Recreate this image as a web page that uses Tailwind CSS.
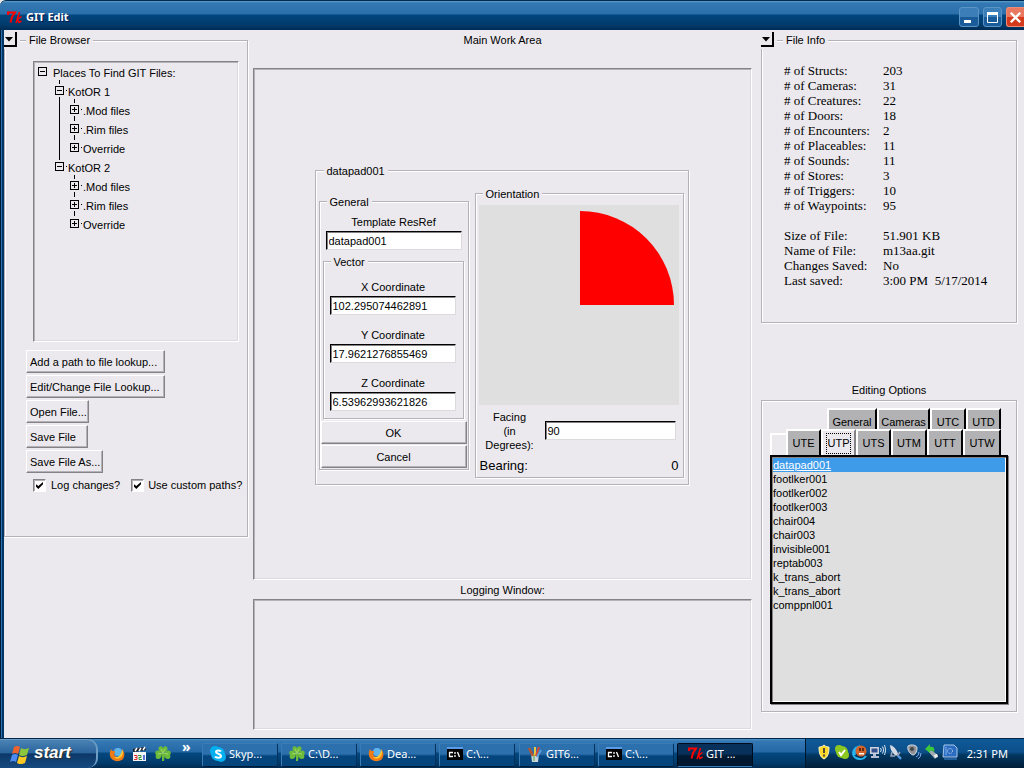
<!DOCTYPE html>
<html lang="en">
<head>
<meta charset="utf-8">
<title>GIT Edit</title>
<script src="https://cdn.jsdelivr.net/npm/@tailwindcss/browser@4"></script>
</head>
<body class="flex h-screen flex-col overflow-hidden bg-[#ebe9ed] font-['Liberation_Sans',sans-serif] text-[11px] leading-[14px] text-black">

<svg class="hidden" aria-hidden="true">
  <symbol id="tk" viewBox="0 0 15 13"><path d="M1 4V1.500H8L5 6 3.500 11.500" fill="none" stroke="#ff0000" stroke-width="2"/><path d="M12.500 1 9 12M14.500 5.500 10.500 8.500 12 11.500 14.500 10" fill="none" stroke="#ff0000" stroke-width="1.500"/></symbol>
  <symbol id="firefox" viewBox="0 0 16 16"><circle cx="8" cy="8" r="7" fill="#2f6fb8"/><circle cx="9" cy="6" r="4" fill="#5fb4e8"/><path d="M2 3C3 5 3 5 5 5 7 5 6 7 5 8c1 4 6 4 8 1 1-2 1-4 0-6 3 3 3 7 1 10-3 3-9 3-12-1C0 9 1 5 2 3Z" fill="#f07a14"/><path d="M13 3c2 3 1 7-2 9-2 1-5 1-6-1 4 1 8-2 8-8Z" fill="#ffc82c"/></symbol>
  <symbol id="clover" viewBox="0 0 16 16"><g fill="#6cbb3a"><path d="M8 7C3 6 3 2 4 1s3-1 4 1c1-2 3-2 4-1s1 5-4 6Z"/><path d="M7 8C5 4 2 4 1 5S0 8 1 9c-1 2 0 4 2 4s4-2 4-5Z"/><path d="M9 8c2-4 5-4 6-3s1 3 0 4c1 2 0 4-2 4s-4-2-4-5Z"/><path d="m7 7 3 1-1 7H7Z"/></g><path d="M6 3l2 4 2-4M3 8l5-1 5 1" fill="none" stroke="#a6d86c"/></symbol>
  <symbol id="cmd" viewBox="0 0 16 13"><path d="M0 0h16v13H0z" fill="#000"/><path d="M0 0h16v2H0z" fill="#5b9be8"/><path d="M6 5.500H2.500v4H6M8 5v2M8 8v2M10.500 5l2 5" stroke="#fff" stroke-width="1.300" fill="none"/></symbol>
  <symbol id="check" viewBox="0 0 9 9"><path d="M0 3v3l3 3 6-6V0L3 5Z" fill="#000"/></symbol>
</svg>

<header class="flex h-[30px] shrink-0 items-center rounded-tl-[6px] border-t border-[#002a50] bg-[linear-gradient(#5f9fce_0,#3479b4_2px,#2a6eaa_13px,#02467f_14px,#003a6b_24px,#002c54_100%)] pl-[7px] font-['Noto_Sans',sans-serif]">
  <svg class="mt-1 h-[13px] w-[15px]"><use href="#tk"/></svg>
  <h1 class="ml-1 mt-[2px] flex-1 text-[11px] font-bold text-white [text-shadow:1px_1px_0_#001a50]">GIT Edit</h1>
  <div class="mt-[3px] flex gap-1">
    <button aria-label="Minimize" class="h-5 w-5 rounded-[3px] border border-[#5b95c8] bg-[linear-gradient(#3c7fb8_50%,#1a5c99_50%)]"><svg viewBox="0 0 18 18"><path d="M4 12h7v3H4z" fill="#fff"/></svg></button>
    <button aria-label="Maximize" class="h-5 w-[19px] rounded-[3px] border border-[#5b95c8] bg-[linear-gradient(#3c7fb8_50%,#1a5c99_50%)]"><svg viewBox="0 0 17 18"><path d="M3.500 4.500h10v10h-10z" fill="none" stroke="#fff"/><path d="M3 4h11v3H3z" fill="#fff"/></svg></button>
    <button aria-label="Close" class="h-5 w-[18px] rounded-l-[3px] border border-r-0 border-[#f08a74] bg-[linear-gradient(#e97860_50%,#d63a1c_50%)]"><svg viewBox="0 0 18 18"><path d="m4 4 10 10M14 4 4 14" stroke="#fff" stroke-width="2.500"/></svg></button>
  </div>
</header>

<main class="flex min-h-0 flex-1">
  <div class="w-1 shrink-0 bg-[linear-gradient(90deg,#001c38_1px,#2e6fa8_1px,#2e6fa8_2px,#003564_2px)]"></div>

  <section class="relative w-[244px] shrink-0 pt-[3px]">
    <div class="absolute left-0 top-[2px] h-[17px] w-4 bg-[#ebe9ed]"></div>
    <button aria-label="Collapse File Browser" class="absolute left-0 top-[2px] z-10 h-[15px] w-[13px] border-b-2 border-r-2 border-black bg-[#ebe9ed]"><svg class="h-[13px] w-[11px]" viewBox="0 0 11 13"><path d="M1 5h8L5 9.500Z"/></svg></button>
    <fieldset class="h-[504px] border border-[#b4b2b8] shadow-[inset_1px_1px_0_#fff,1px_1px_0_#fff]">
      <legend class="ml-[21px] bg-[#ebe9ed] px-[3px]">File Browser</legend>
      <div class="relative ml-7 mt-[14px] h-[281px] w-[206px] border border-b-white border-l-[#848284] border-r-white border-t-[#848284] pt-px shadow-[inset_1px_1px_0_#b4b2b8,inset_-1px_-1px_0_#dcdadf]">
        <svg class="absolute left-0 top-0 h-[180px] w-[60px]" viewBox="34 62 60 180" fill="none" stroke="#000"><path d="M59.500 80v4M59.500 97v63M74.500 99v4M74.500 116v5M74.500 135v5M74.500 175v4M74.500 192v5M74.500 211v5M66 90.500h1M66 166.500h1M81 109.500h1M81 128.500h1M81 147.500h1M81 185.500h1M81 204.500h1M81 223.500h1"/></svg>
        <ul class="relative">
          <li class="flex h-[19px] items-center gap-1.5 pl-1"><button aria-label="Collapse Places" class="mb-0.5 h-[9px] w-[9px] border border-black"><svg viewBox="0 0 7 7"><path d="M1 3.500h5" stroke="#000"/></svg></button>Places To Find GIT Files:</li>
          <li class="flex h-[19px] items-center gap-1 pl-[21px]"><button aria-label="Collapse KotOR 1" class="mb-0.5 h-[9px] w-[9px] border border-black"><svg viewBox="0 0 7 7"><path d="M1 3.500h5" stroke="#000"/></svg></button>KotOR 1</li>
          <li class="flex h-[19px] items-center gap-1 pl-9"><button aria-label="Expand Mod" class="mb-0.5 h-[9px] w-[9px] border border-black"><svg viewBox="0 0 7 7"><path d="M1 3.500h5M3.500 1v5" stroke="#000"/></svg></button>.Mod files</li>
          <li class="flex h-[19px] items-center gap-1 pl-9"><button aria-label="Expand Rim" class="mb-0.5 h-[9px] w-[9px] border border-black"><svg viewBox="0 0 7 7"><path d="M1 3.500h5M3.500 1v5" stroke="#000"/></svg></button>.Rim files</li>
          <li class="flex h-[19px] items-center gap-1 pl-9"><button aria-label="Expand Override" class="mb-0.5 h-[9px] w-[9px] border border-black"><svg viewBox="0 0 7 7"><path d="M1 3.500h5M3.500 1v5" stroke="#000"/></svg></button>Override</li>
          <li class="flex h-[19px] items-center gap-1 pl-[21px]"><button aria-label="Collapse KotOR 2" class="mb-0.5 h-[9px] w-[9px] border border-black"><svg viewBox="0 0 7 7"><path d="M1 3.500h5" stroke="#000"/></svg></button>KotOR 2</li>
          <li class="flex h-[19px] items-center gap-1 pl-9"><button aria-label="Expand Mod" class="mb-0.5 h-[9px] w-[9px] border border-black"><svg viewBox="0 0 7 7"><path d="M1 3.500h5M3.500 1v5" stroke="#000"/></svg></button>.Mod files</li>
          <li class="flex h-[19px] items-center gap-1 pl-9"><button aria-label="Expand Rim" class="mb-0.5 h-[9px] w-[9px] border border-black"><svg viewBox="0 0 7 7"><path d="M1 3.500h5M3.500 1v5" stroke="#000"/></svg></button>.Rim files</li>
          <li class="flex h-[19px] items-center gap-1 pl-9"><button aria-label="Expand Override" class="mb-0.5 h-[9px] w-[9px] border border-black"><svg viewBox="0 0 7 7"><path d="M1 3.500h5M3.500 1v5" stroke="#000"/></svg></button>Override</li>
        </ul>
      </div>
      <div class="ml-[21px] mt-2 flex flex-col items-start gap-0.5 [&>button]:h-[23px] [&>button]:whitespace-nowrap [&>button]:border [&>button]:border-b-[#848284] [&>button]:border-l-white [&>button]:border-r-[#848284] [&>button]:border-t-white [&>button]:pl-[3px] [&>button]:text-left [&>button]:shadow-[inset_-1px_-1px_0_#b4b2b8]">
        <button class="w-[139px]">Add a path to file lookup...</button>
        <button class="w-[139px]">Edit/Change File Lookup...</button>
        <button class="w-[63px]">Open File...</button>
        <button class="w-[62px]">Save File</button>
        <button class="w-[77px]">Save File As...</button>
      </div>
      <div class="ml-7 mt-[5px] flex gap-[11px] whitespace-nowrap">
        <label class="flex items-center gap-[5px]"><span class="relative h-[13px] w-[13px]"><input type="checkbox" checked class="block h-[13px] w-[13px] appearance-none border border-b-white border-l-[#848284] border-r-white border-t-[#848284] bg-white shadow-[inset_1px_1px_0_#b4b2b8]"><svg class="pointer-events-none absolute left-[3px] top-[3px] h-[7px] w-[7px]"><use href="#check"/></svg></span>Log changes?</label>
        <label class="flex items-center gap-1"><span class="relative h-[13px] w-[13px]"><input type="checkbox" checked class="block h-[13px] w-[13px] appearance-none border border-b-white border-l-[#848284] border-r-white border-t-[#848284] bg-white shadow-[inset_1px_1px_0_#b4b2b8]"><svg class="pointer-events-none absolute left-[3px] top-[3px] h-[7px] w-[7px]"><use href="#check"/></svg></span>Use custom paths?</label>
      </div>
    </fieldset>
  </section>

  <section class="ml-[5px] flex min-w-0 flex-1 flex-col pb-2 pt-[3px] text-center">
    <h2>Main Work Area</h2>
    <div class="mt-[21px] flex min-h-0 flex-1 items-center justify-center border border-b-white border-l-[#848284] border-r-white border-t-[#848284] pr-[2px] text-left shadow-[inset_1px_1px_0_#b4b2b8,inset_-1px_-1px_0_#dcdadf]">
      <fieldset class="flex items-start border border-[#b4b2b8] pb-1.5 pl-[3px] pr-1 shadow-[inset_1px_1px_0_#fff,1px_1px_0_#fff]">
        <legend class="ml-[5px] bg-[#ebe9ed] px-[3px]">datapad001</legend>
        <div class="flex items-start gap-1.5">
          <fieldset class="mt-[17px] w-[150px] border border-[#b4b2b8] pb-px shadow-[inset_1px_1px_0_#fff,1px_1px_0_#fff]">
            <legend class="ml-[7px] bg-[#ebe9ed] px-[3px]">General</legend>
            <label for="resref" class="mt-1.5 block text-center">Template ResRef</label>
            <input id="resref" value="datapad001" class="ml-1.5 mt-0.5 block h-[19px] w-[136px] border border-b-[#dcdadf] border-l-black border-r-[#dcdadf] border-t-black bg-white pl-[2px] pt-px shadow-[inset_1px_1px_0_#848284]">
            <fieldset class="ml-[3px] mt-[5px] w-[141px] border border-[#b4b2b8] px-1.5 pb-[7px] shadow-[inset_1px_1px_0_#fff,1px_1px_0_#fff]">
              <legend class="ml-[1px] bg-[#ebe9ed] px-[3px]">Vector</legend>
              <label for="x" class="mt-[11px] block text-center">X Coordinate</label>
              <input id="x" value="102.295074462891" class="mt-0.5 block h-[19px] w-[126px] border border-b-[#dcdadf] border-l-black border-r-[#dcdadf] border-t-black bg-white pl-[2px] pt-px shadow-[inset_1px_1px_0_#848284]">
              <label for="y" class="mt-[13px] block text-center">Y Coordinate</label>
              <input id="y" value="17.9621276855469" class="mt-0.5 block h-[19px] w-[126px] border border-b-[#dcdadf] border-l-black border-r-[#dcdadf] border-t-black bg-white pl-[2px] pt-px shadow-[inset_1px_1px_0_#848284]">
              <label for="z" class="mt-[13px] block text-center">Z Coordinate</label>
              <input id="z" value="6.53962993621826" class="mt-0.5 block h-[19px] w-[126px] border border-b-[#dcdadf] border-l-black border-r-[#dcdadf] border-t-black bg-white pl-[2px] pt-px shadow-[inset_1px_1px_0_#848284]">
            </fieldset>
            <div class="mt-0.5 flex flex-col gap-px px-px [&>button]:h-[23px] [&>button]:border [&>button]:border-b-[#848284] [&>button]:border-l-white [&>button]:border-r-[#848284] [&>button]:border-t-white [&>button]:pt-[2px] [&>button]:shadow-[inset_-1px_-1px_0_#b4b2b8]">
              <button>OK</button>
              <button>Cancel</button>
            </div>
          </fieldset>
          <fieldset class="mt-[9px] w-[209px] border border-[#b4b2b8] px-[3px] pb-1 shadow-[inset_1px_1px_0_#fff,1px_1px_0_#fff]">
            <legend class="ml-[4px] bg-[#ebe9ed] px-[3px]">Orientation</legend>
            <svg class="mt-1 block h-[200px] w-[200px] bg-[#dfdfdf]" viewBox="0 0 200 200"><path d="M101 100V6a94 94 0 0 1 94 94Z" fill="#f00"/></svg>
            <div class="mt-[5px] flex">
              <label for="facing" class="w-[66px] pr-1 text-center">Facing<br>(in<br>Degrees):</label>
              <input id="facing" value="90" class="mt-[11px] block h-[19px] w-[131px] border border-b-[#dcdadf] border-l-black border-r-[#dcdadf] border-t-black bg-white pl-[2px] pt-px shadow-[inset_1px_1px_0_#848284]">
            </div>
            <div class="mt-[7px] flex justify-between px-px text-[13px]"><span>Bearing:</span><span>0</span></div>
          </fieldset>
        </div>
      </fieldset>
    </div>
    <h2 class="mt-[3px]">Logging Window:</h2>
    <div class="mt-[2px] h-[131px] shrink-0 border border-b-white border-l-[#848284] border-r-white border-t-[#848284] shadow-[inset_1px_1px_0_#b4b2b8,inset_-1px_-1px_0_#dcdadf]"></div>
  </section>

  <section class="relative ml-[9px] mr-[7px] w-[256px] shrink-0 pt-[3px]">
    <div class="absolute left-0 top-[2px] h-[17px] w-4 bg-[#ebe9ed]"></div>
    <button aria-label="Collapse File Info" class="absolute left-0 top-[2px] z-10 h-[15px] w-[13px] border-b-2 border-r-2 border-black bg-[#ebe9ed]"><svg class="h-[13px] w-[11px]" viewBox="0 0 11 13"><path d="M1 5h8L5 9.500Z"/></svg></button>
    <fieldset class="h-[290px] border border-[#b4b2b8] shadow-[inset_1px_1px_0_#fff,1px_1px_0_#fff]">
      <legend class="ml-[21px] bg-[#ebe9ed] px-[3px]">File Info</legend>
      <table class="ml-[22px] mt-4 font-['Liberation_Serif',serif] text-[13px] leading-[15px] [&_td]:p-0 [&_th]:w-[99px] [&_th]:p-0 [&_th]:text-left [&_th]:font-normal">
        <tbody>
        <tr><th scope="row"># of Structs:</th><td>203</td></tr>
        <tr><th scope="row"># of Cameras:</th><td>31</td></tr>
        <tr><th scope="row"># of Creatures:</th><td>22</td></tr>
        <tr><th scope="row"># of Doors:</th><td>18</td></tr>
        <tr><th scope="row"># of Encounters:</th><td>2</td></tr>
        <tr><th scope="row"># of Placeables:</th><td>11</td></tr>
        <tr><th scope="row"># of Sounds:</th><td>11</td></tr>
        <tr><th scope="row"># of Stores:</th><td>3</td></tr>
        <tr><th scope="row"># of Triggers:</th><td>10</td></tr>
        <tr><th scope="row"># of Waypoints:</th><td>95</td></tr>
        </tbody>
        <tbody class="before:block before:h-[15px]">
        <tr><th scope="row">Size of File:</th><td>51.901 KB</td></tr>
        <tr><th scope="row">Name of File:</th><td>m13aa.git</td></tr>
        <tr><th scope="row">Changes Saved:</th><td>No</td></tr>
        <tr><th scope="row">Last saved:</th><td class="whitespace-pre">3:00 PM  5/17/2014</td></tr>
        </tbody>
      </table>
    </fieldset>
    <h2 class="mt-[60px] text-center">Editing Options</h2>
    <div class="mt-[3px] border border-[#b4b2b8] px-2 pb-[7px] pt-[7px] shadow-[inset_1px_1px_0_#fff,1px_1px_0_#fff]">
      <div role="tablist" class="pr-[7px] [&_button]:border-l-2 [&_button]:border-r-2 [&_button]:border-t-2 [&_button]:border-l-white [&_button]:border-r-black [&_button]:border-t-white [&_button]:bg-[#b2b2b4]">
        <div class="flex h-[21px] justify-end [&>button]:pt-1">
          <button role="tab" class="w-[50px]">General</button><button role="tab" class="w-[53px]">Cameras</button><button role="tab" class="w-[36px]">UTC</button><button role="tab" class="w-[35px]">UTD</button>
        </div>
        <div class="flex h-[26px] justify-end">
          <span class="mt-1 w-4 border-l-2 border-t-2 border-white"></span>
          <button role="tab" class="w-[35px]">UTE</button><button role="tab" aria-selected="true" class="w-[35px] border-r-[#848284]! bg-[#ebe9ed]! px-[3px]"><span class="flex h-[21px] items-center justify-center border border-dotted border-black">UTP</span></button><button role="tab" class="w-[35px]">UTS</button><button role="tab" class="w-[36px]">UTM</button><button role="tab" class="w-[36px]">UTT</button><button role="tab" class="w-[38px]">UTW</button>
        </div>
      </div>
      <ul class="h-[249px] border-2 border-black bg-[#dfdfdf] px-px pt-px shadow-[inset_1px_1px_0_#848284,inset_-1px_-1px_0_#fff,1px_1px_0_#848284] [&>li]:h-[14px]">
        <li class="bg-[#3d9be9] text-white underline">datapad001</li>
        <li>footlker001</li><li>footlker002</li><li>footlker003</li><li>chair004</li><li>chair003</li><li>invisible001</li><li>reptab003</li><li>k_trans_abort</li><li>k_trans_abort</li><li>comppnl001</li>
      </ul>
    </div>
  </section>
</main>

<footer class="flex h-[30px] shrink-0 items-center border-t border-[#00264a] bg-[linear-gradient(#4f93c8_0,#3478b4_2px,#2469a6_13px,#04487f_14px,#003a6a_24px,#002a50_100%)] font-['Noto_Sans',sans-serif] text-[11px] text-white">
  <button class="flex h-full w-[98px] shrink-0 items-center gap-1 rounded-r-[10px] border-r-2 border-t border-[#6d9cc4] bg-[linear-gradient(#4a82b4_0,#2b659c_45%,#0c3868_50%,#174a80_100%)] pl-[10px]">
    <svg class="h-[19px] w-[20px]" viewBox="0 0 20 19"><path d="M4 2c2-1.500 4-1.500 6 0L8 9C6 7.500 4 7.500 2 9Z" fill="#f0622c"/><path d="M11 3c2 1.500 5 1.500 8 0l-2 7c-3 1.500-6 1.500-8 0Z" fill="#8cc63c"/><path d="M2 10c2-1.500 4-1.500 6 0l-2 7c-2-1.500-4-1.500-6 0Z" fill="#4c8cf0"/><path d="M9 11c2 1.500 5 1.500 8 0l-2 7c-3 1.500-6 1.500-8 0Z" fill="#fcc824"/></svg>
    <span class="mb-0.5 font-['Liberation_Sans',sans-serif] text-[17px] font-bold italic [text-shadow:1px_1px_1px_#333]">start</span>
  </button>
  <nav aria-label="Quick launch" class="ml-[11px] flex w-[93px] shrink-0 items-center gap-[7px]">
    <button aria-label="Firefox"><svg class="h-4 w-4"><use href="#firefox"/></svg></button>
    <button aria-label="Media Player Classic"><svg class="h-4 w-4" viewBox="0 0 16 16"><path d="M1 6h13v9H1z" fill="#f4f4f4"/><path d="M1 3 13 1l1 3L1 6Z" fill="#222"/><path d="m3 5 2-3M7 5l2-3M11 4l2-3M3 7h1M7 7h1M11 7h1" stroke="#fff" stroke-width="1.500"/><path d="M2 9.500h3v2H3M5 11.500v2H2" stroke="#e03030" fill="none"/><path d="M6 9.500h3v2H7v2h3" stroke="#2a9a3a" fill="none"/><path d="M12 9v5" stroke="#2a50d0" stroke-width="1.500"/></svg></button>
    <button aria-label="Clover"><svg class="h-4 w-4"><use href="#clover"/></svg></button>
    <button aria-label="More" class="-mt-[14px] ml-1 text-[14px] font-bold">»</button>
  </nav>
  <nav aria-label="Tasks" class="flex min-w-0 flex-1 gap-[3px] pt-[2px] [&>button]:flex [&>button]:h-[24px] [&>button]:w-[76px] [&>button]:items-center [&>button]:gap-[3px] [&>button]:whitespace-nowrap [&>button]:rounded-[2px] [&>button]:border [&>button]:border-b-[#001c38] [&>button]:border-l-[#3a7cb6] [&>button]:border-r-[#00305c] [&>button]:border-t-[#3a7cb6] [&>button]:pb-0.5 [&>button]:pl-[7px]">
    <button class="bg-[linear-gradient(#2d70ae_45%,#05457e_55%)]"><svg class="h-4 w-4" viewBox="0 0 16 16"><circle cx="5" cy="5" r="5" fill="#00aff0"/><circle cx="11" cy="11" r="5" fill="#00aff0"/><circle cx="8" cy="8" r="7" fill="#00aff0"/><path d="M11 5.500C10 4 6 4 6 6s5 1.500 5 4-5 2-6 .5" fill="none" stroke="#fff" stroke-width="2"/></svg>Skyp...</button>
    <button class="bg-[linear-gradient(#2d70ae_45%,#05457e_55%)]"><svg class="h-4 w-4"><use href="#clover"/></svg>C:\D...</button>
    <button class="bg-[linear-gradient(#2d70ae_45%,#05457e_55%)]"><svg class="h-4 w-4"><use href="#firefox"/></svg>Dea...</button>
    <button class="bg-[linear-gradient(#2d70ae_45%,#05457e_55%)]"><svg class="h-[13px] w-4"><use href="#cmd"/></svg>C:\...</button>
    <button class="ml-px bg-[linear-gradient(#2d70ae_45%,#05457e_55%)]"><svg class="h-4 w-4" viewBox="0 0 16 16"><path d="M4 8h8l-1 8H5Z" fill="#c9d4dc"/><path d="m6 10-4-8" stroke="#b5542a" stroke-width="2.500"/><path d="M8 10V1" stroke="#e8c840" stroke-width="2"/><path d="m9 10 3-9" stroke="#d8483a" stroke-width="2"/><path d="m10 11 4-7" stroke="#58a0dc" stroke-width="2"/><path d="M7 9v6" stroke="#5ca83c"/></svg>GIT6...</button>
    <button class="bg-[linear-gradient(#2d70ae_45%,#05457e_55%)]"><svg class="h-[13px] w-4"><use href="#cmd"/></svg>C:\...</button>
    <button aria-pressed="true" class="border-[#000c1c]! border-b-[#3a7cb6]! bg-[linear-gradient(#07305a_45%,#001830_55%)] pl-[10px]!"><svg class="h-[13px] w-[15px]"><use href="#tk"/></svg>GIT ...</button>
  </nav>
  <div class="flex h-full w-[219px] shrink-0 items-center border-l border-[#00172e] bg-[linear-gradient(#0f5a98_0,#0c4f8a_45%,#033760_55%,#001d38_100%)] pl-[10px] pr-[16px]">
    <div class="-mt-[3px] flex gap-[2px] [&>svg]:h-4 [&>svg]:w-4">
      <svg viewBox="0 0 16 16"><path d="M8 1c2 2 4 2 5 2 0 6-1 10-5 12C4 13 3 9 3 3c1 0 3 0 5-2Z" fill="#ffd92a" stroke="#f7f3c0"/><path d="M8 4v5M8 10.500v2" stroke="#333" stroke-width="1.700"/></svg>
      <svg viewBox="0 0 16 16"><circle cx="5" cy="5" r="4" fill="#8cc820"/><circle cx="11" cy="11" r="4" fill="#8cc820"/><circle cx="8" cy="8" r="6" fill="#8cc820"/><path d="m5 8 2 3 4-5" stroke="#fff" stroke-width="2" fill="none"/></svg>
      <svg viewBox="0 0 16 16"><path d="M5 3C0 6 0 12 4 14c4 2 8 1 10-2M3 11C2 6 5 3 8 2" fill="none" stroke="#28b4f0" stroke-width="2"/><circle cx="9" cy="7" r="5.500" fill="#d4642a"/><path d="M8 4v3M11 4v3" stroke="#401800" stroke-width="1.500"/><path d="M7 9h5v1.500H7z" fill="#fff"/></svg>
      <svg viewBox="0 0 16 16"><path d="M0 3h9v7H0z" fill="#c9d2de"/><path d="M1.500 4.500h6v4h-6z" fill="#35508c"/><path d="M3 10h3v2h3v2H1v-2h2z" fill="#b5bfd4"/><path d="M10.500 4q1.500 2 0 4M12.500 2.500q2.500 3.500 0 7M14.500 1q2.500 5 0 10" stroke="#d8e2ee" fill="none"/></svg>
      <svg viewBox="0 0 16 16"><path d="M2 1c4 1 7 5 8 9l-2 2C4 9 2 5 2 1Z" fill="#d4dae2"/><path d="m4 8-1 4 4 0M9 11l4 3M12 8l-2 3" stroke="#9aa6b8" fill="none" stroke-width="1.500"/><path d="m10 12 3 3" stroke="#4c9cf0" stroke-width="2"/></svg>
      <svg viewBox="0 0 16 16"><path d="M2 2c3-2 9-1 9 2 0 4-2 7-4 7C4 10 1 6 2 2Z" fill="#8e9298" stroke="#dde0e4"/><circle cx="6" cy="5" r="2" fill="#444"/><path d="M10 13q3-1 3-5M12 15q3-2 3-6" stroke="#84a8f0" fill="none"/></svg>
      <svg viewBox="0 0 16 16"><path d="m4 7 3-1 7 5-3 4Z" fill="#a4acb4"/><path d="m10 11 3-1 1 3-3 1Z" fill="#eee"/><path d="m1 5 5-5v3c4-1 5 2 4 6-1-3-2-3-4-2v2Z" fill="#3cc83c"/></svg>
      <svg viewBox="0 0 16 16"><path d="M2 1h10l3 3v9H1z" fill="#2c6cc0" stroke="#a8c8ee"/><circle cx="8" cy="7" r="2.500" fill="none" stroke="#c8dcf4" stroke-dasharray="1 1"/><path d="M4 3v8" stroke="#7cb0ec"/><path d="M2 15h13" stroke="#3c8ce4"/></svg>
    </div>
    <time class="ml-auto whitespace-nowrap">2:31 PM</time>
  </div>
</footer>
</body>
</html>
